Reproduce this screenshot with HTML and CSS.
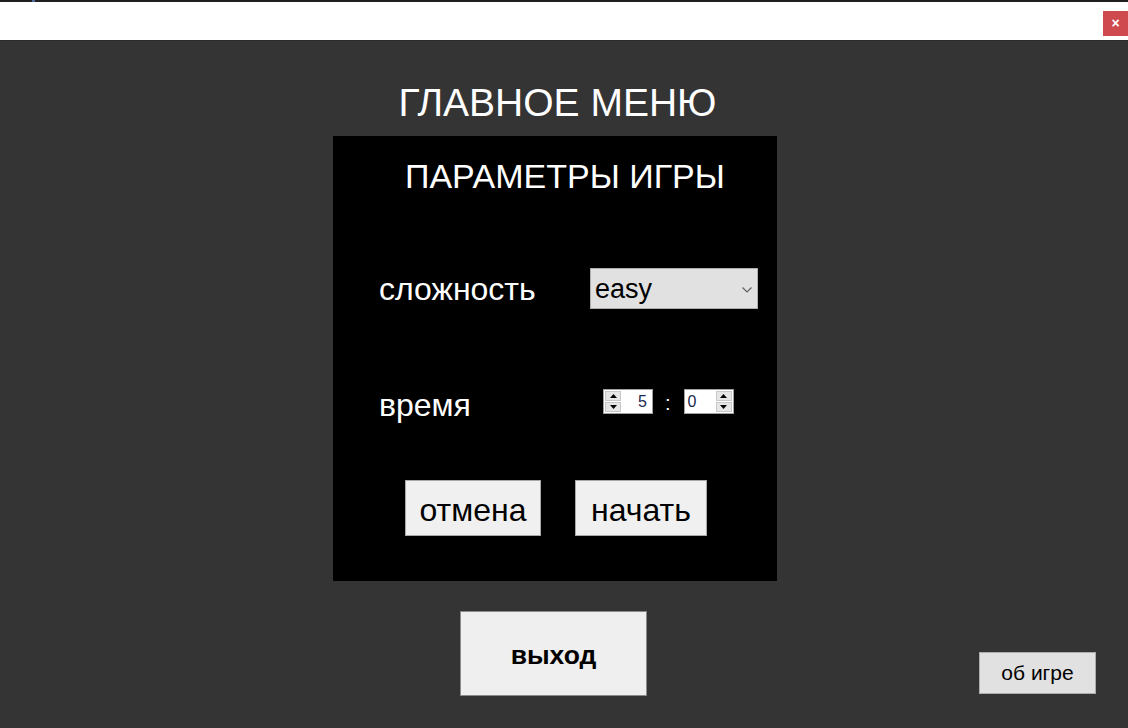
FILE: index.html
```html
<!DOCTYPE html>
<html lang="ru">
<head>
<meta charset="utf-8">
<title>Главное меню</title>
<link rel="stylesheet" href="styles.css">
</head>
<body>
<div class="window">
  <div class="titlebar">
    <span class="mark"></span>
    <button class="close">×</button>
  </div>
  <div class="main">
    <h1 class="title">ГЛАВНОЕ МЕНЮ</h1>
    <div class="panel">
      <h2 class="panel-title">ПАРАМЕТРЫ ИГРЫ</h2>
      <div class="row">
        <span class="label">сложность</span>
        <div class="select">
          <span class="select-value">easy</span>
          <svg class="chevron" width="10" height="6" viewBox="0 0 10 6"><path d="M0.5 0.5 L5 5 L9.5 0.5" fill="none" stroke="#606060" stroke-width="1.2"/></svg>
        </div>
      </div>
      <div class="row row-time">
        <span class="label label-time">время</span>
        <div class="time">
          <div class="spin spin-left">
            <div class="spin-btns">
              <span class="spin-btn"><svg width="7" height="4" viewBox="0 0 7 4"><path d="M0 4 L3.5 0 L7 4 Z" fill="#000"/></svg></span>
              <span class="spin-btn"><svg width="7" height="4" viewBox="0 0 7 4"><path d="M0 0 L3.5 4 L7 0 Z" fill="#000"/></svg></span>
            </div>
            <span class="spin-val right">5</span>
          </div>
          <span class="colon">:</span>
          <div class="spin">
            <span class="spin-val">0</span>
            <div class="spin-btns">
              <span class="spin-btn"><svg width="7" height="4" viewBox="0 0 7 4"><path d="M0 4 L3.5 0 L7 4 Z" fill="#000"/></svg></span>
              <span class="spin-btn"><svg width="7" height="4" viewBox="0 0 7 4"><path d="M0 0 L3.5 4 L7 0 Z" fill="#000"/></svg></span>
            </div>
          </div>
        </div>
      </div>
      <div class="actions">
        <button class="btn btn-cancel">отмена</button>
        <button class="btn btn-start">начать</button>
      </div>
    </div>
    <div class="bottom">
      <span></span>
      <button class="exit">выход</button>
      <button class="about">об игре</button>
    </div>
  </div>
</div>
</body>
</html>
```

FILE: styles.css
```css
* { box-sizing: border-box; }
html, body { margin: 0; padding: 0; }
body {
  width: 1128px;
  height: 728px;
  overflow: hidden;
  font-family: "Liberation Sans", Arial, sans-serif;
  background: #333433;
}
button { font-family: inherit; cursor: pointer; }

.window { display: flex; flex-direction: column; height: 728px; }

.titlebar {
  height: 40px;
  background: #ffffff;
  border-top: 2px solid #1f1f1f;
  position: relative;
  display: flex;
  justify-content: flex-end;
  align-items: flex-start;
  padding-top: 9px;
}
.mark {
  position: absolute;
  left: 32px;
  top: -2px;
  width: 3px;
  height: 2px;
  background: #4a6aa0;
}
.close {
  width: 25px;
  height: 25px;
  border: none;
  background: #cf4a4f;
  color: #ffffff;
  font-size: 14px;
  font-weight: bold;
  line-height: 25px;
  padding: 0;
  margin: 0;
}

.main {
  flex: 1;
  background: #333433;
  border-top: 1px solid #2a2b2a;
  padding-right: 18px;
  display: flex;
  flex-direction: column;
}

.title {
  margin: 39px 0 0 0;
  padding-left: 5px;
  font-size: 39px;
  line-height: 45px;
  font-weight: normal;
  color: #ffffff;
  text-align: center;
}

.panel {
  width: 444px;
  height: 445px;
  margin: 11px auto 0 auto;
  background: #000000;
  padding: 21px 0 0 46px;
  display: flex;
  flex-direction: column;
}
.panel-title {
  margin: 0 0 0 26px;
  font-size: 34px;
  line-height: 38px;
  font-weight: normal;
  color: #ffffff;
  white-space: nowrap;
}

.row {
  display: flex;
  align-items: center;
  height: 41px;
  margin-top: 73px;
}
.row-time { margin-top: 72px; }
.label {
  width: 211px;
  font-size: 32px;
  line-height: 41px;
  color: #ffffff;
  padding-top: 1px;
}
.label-time { padding-top: 8px; }

.select {
  width: 168px;
  height: 41px;
  background: #e1e1e1;
  border: 1px solid #adadad;
  display: flex;
  align-items: center;
  justify-content: space-between;
  padding: 2px 5px 0 4px;
}
.select-value { font-size: 27px; color: #000; }

.time {
  display: flex;
  align-items: center;
  margin-left: 13px;
}
.spin {
  width: 50px;
  height: 25px;
  background: #ffffff;
  border: 1px solid #a0a0a0;
  display: flex;
  align-items: stretch;
}
.spin-btns {
  width: 18px;
  display: flex;
  flex-direction: column;
  padding: 1px;
  gap: 1px;
}
.spin-btn {
  flex: 1;
  background: #e6e6e6;
  border: 1px solid #c8c8c8;
  display: flex;
  align-items: center;
  justify-content: center;
}
.spin-val {
  flex: 1;
  font-size: 16px;
  line-height: 23px;
  color: #1a2a50;
  padding: 0 3px;
}
.spin-val.right { text-align: right; padding-right: 5px; }
.colon {
  color: #ffffff;
  font-size: 20px;
  margin: 4px 13px 0 12px;
}

.actions {
  display: flex;
  gap: 34px;
  margin-top: 58px;
  padding-left: 26px;
}
.btn {
  height: 56px;
  background: #f0f0f0;
  border: 1px solid #a8a8a8;
  font-size: 32px;
  color: #000;
  padding: 4px 0 0 0;
}
.btn-cancel { width: 136px; }
.btn-start { width: 132px; }

.bottom {
  display: grid;
  grid-template-columns: 1fr 187px 1fr;
  margin-top: 30px;
  padding-right: 3px;
}
.exit {
  grid-column: 2;
  width: 187px;
  height: 85px;
  background: #efefef;
  border: 1px solid #8a8a8a;
  font-size: 26.5px;
  font-weight: bold;
  color: #000;
  padding: 4px 0 0 0;
}
.about {
  grid-column: 3;
  justify-self: end;
  align-self: end;
  margin: 0 11px 2px 0;
  width: 117px;
  height: 42px;
  background: #e1e1e1;
  border: 1px solid #adadad;
  font-size: 21px;
  color: #000;
  padding: 0;
}
```
